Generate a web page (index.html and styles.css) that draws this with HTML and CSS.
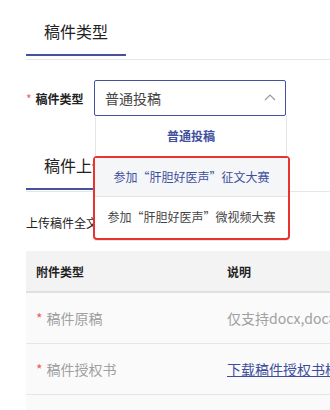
FILE: index.html
```html
<!DOCTYPE html>
<html>
	<head>
		<meta charset="utf-8" />
		<title>稿件上传</title>
		<link rel="stylesheet" href="styles.css">
	</head>
	<body>
		<div class="tab-bar">
			<div class="tab active">稿件类型</div>
		</div>
		<div class="form-row">
			<label class="form-label"><span class="required">*</span>稿件类型</label>
			<div class="select">
				<div class="select-input">
					<span>普通投稿</span>
					<svg class="arrow" width="12" height="8" viewBox="0 0 12 8">
						<polyline points="1,7 6,2 11,7" fill="none" stroke="#9a9a9a" stroke-width="1.2" />
					</svg>
				</div>
				<div class="dropdown">
					<div class="option selected">普通投稿</div>
					<div class="highlight">
						<div class="option hover">参加“肝胆好医声”征文大赛</div>
						<div class="option">参加“肝胆好医声”微视频大赛</div>
					</div>
				</div>
			</div>
		</div>
		<div class="tab-bar second">
			<div class="tab active">稿件上传</div>
		</div>
		<p class="hint">上传稿件全文及授权书</p>
		<table class="files">
			<thead>
				<tr>
					<th class="col-type">附件类型</th>
					<th>说明</th>
				</tr>
			</thead>
			<tbody>
				<tr>
					<td class="col-type"><span class="required">*</span>稿件原稿</td>
					<td>仅支持docx,doc格式文件</td>
				</tr>
				<tr>
					<td class="col-type"><span class="required">*</span>稿件授权书</td>
					<td><a class="link" href="#">下载稿件授权书模板</a></td>
				</tr>
				<tr>
					<td class="col-type"></td>
					<td></td>
				</tr>
			</tbody>
		</table>
	</body>
</html>
```
FILE: styles.css
```css
body {
	margin: 0px;
	padding-left: 26px;
	overflow: hidden;
	width: 420px;
	font-family: "Noto Sans CJK SC", "Noto Sans", sans-serif;
	color: #222222;
	background-color: white;
}

.tab-bar {
	border-bottom: 1px solid #e6e6e6;
	padding-bottom: 3px;
}

.tab {
	width: 100px;
	text-align: center;
	font-size: 16px;
	line-height: 22px;
	padding-top: 20px;
	padding-bottom: 12px;
}

.tab.active {
	border-bottom: 2px solid #44529f;
}

.tab-bar.second {
	margin-top: 18px;
	padding-bottom: 1px;
}

.form-row {
	display: flex;
	align-items: center;
	margin-top: 20px;
}

.form-label {
	width: 68px;
	font-size: 12px;
	font-weight: bold;
	color: #222222;
}

.required {
	color: #f0605c;
	font-weight: normal;
	margin-right: 4px;
}

.select {
	position: relative;
	width: 192px;
}

.select-input {
	height: 34px;
	border: 1px solid #44529f;
	border-radius: 2px;
	display: flex;
	align-items: center;
	justify-content: space-between;
	padding: 0px 9px 0px 10px;
	font-size: 14px;
	color: #444444;
}

.arrow {
	margin-bottom: 2px;
}

.dropdown {
	position: absolute;
	top: 36px;
	left: 1px;
	width: 190px;
	background-color: white;
	border: 1px solid #e4e6ea;
	border-top: none;
	z-index: 10;
}

.option {
	height: 40px;
	line-height: 40px;
	text-align: center;
	font-size: 12px;
	color: #444444;
	white-space: nowrap;
}

.option.selected {
	color: #3d4e9c;
	font-weight: bold;
}

.option.hover {
	background-color: #f5f6f8;
	color: #3d4e9c;
	border-bottom: 1px solid #e4e4e4;
}

.highlight {
	margin: 0px -4px 0px -3px;
	border: 2px solid #e8332f;
	border-radius: 4px;
	background-color: white;
	padding-bottom: 1px;
}

.highlight .option.hover {
	height: 38px;
	line-height: 38px;
	margin-top: 0px;
}

.hint {
	margin: 22px 0px 0px 0px;
	font-size: 12px;
	line-height: 18px;
	color: #222222;
}

.files {
	margin-top: 19px;
	border-collapse: collapse;
	width: 420px;
	font-size: 14px;
}

.files th {
	height: 40px;
	padding: 0px 10px;
	text-align: left;
	font-size: 12px;
	font-weight: bold;
	color: #222222;
	background-color: #f3f3f3;
	border-bottom: 2px solid #e0e0e0;
}

.files td {
	height: 50px;
	padding: 0px 10px;
	color: #a0a0a0;
	background-color: #fafafa;
	border-bottom: 1px solid #e6e6e6;
	white-space: nowrap;
}

.col-type {
	width: 171px;
}

.link {
	color: #3d4e9c;
	text-decoration: underline;
}
```
